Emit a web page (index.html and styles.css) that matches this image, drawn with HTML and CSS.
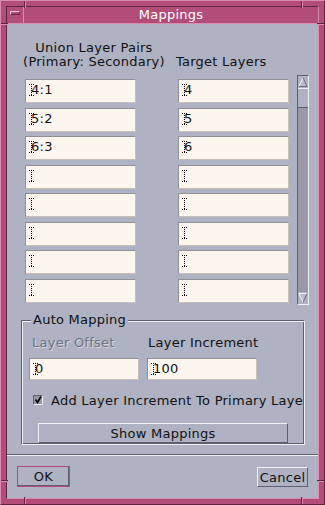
FILE: index.html
```html
<!DOCTYPE html>
<html lang="en">

<head>
  <meta charset="UTF-8">
  <title>Mappings</title>
  <meta name="viewport" content="width=device-width, initial-scale=1.0">
  <link rel="stylesheet" href="styles.css">
</head>

<body>
  <div class="window">
    <!-- frame corner marks -->
    <span class="notch notch-v" style="left: 23px; top: 0"></span>
    <span class="notch notch-v" style="left: 300px; top: 0"></span>
    <span class="notch notch-v" style="left: 23px; bottom: 0"></span>
    <span class="notch notch-v" style="left: 300px; bottom: 0"></span>
    <span class="notch notch-h" style="top: 22px; left: 0"></span>
    <span class="notch notch-h" style="top: 22px; right: 0"></span>
    <span class="notch notch-h" style="top: 479px; left: 0"></span>
    <span class="notch notch-h" style="top: 479px; right: 0"></span>

    <div class="inner">
      <div class="titlebar">
        <span class="menu-btn"><i></i></span>
        <span class="title">Mappings</span>
      </div>

      <div class="client">
        <div class="headings">
          <div class="head-left">Union Layer Pairs<br>(Primary: Secondary)</div>
          <div class="head-right">Target Layers</div>
        </div>

        <div class="lists">
          <div class="fields">
            <div class="field"><span class="caret"></span>4:1</div>
            <div class="field"><span class="caret"></span>4</div>
            <div class="field"><span class="caret"></span>5:2</div>
            <div class="field"><span class="caret"></span>5</div>
            <div class="field"><span class="caret"></span>6:3</div>
            <div class="field"><span class="caret"></span>6</div>
            <div class="field"><span class="caret"></span></div>
            <div class="field"><span class="caret"></span></div>
            <div class="field"><span class="caret"></span></div>
            <div class="field"><span class="caret"></span></div>
            <div class="field"><span class="caret"></span></div>
            <div class="field"><span class="caret"></span></div>
            <div class="field"><span class="caret"></span></div>
            <div class="field"><span class="caret"></span></div>
            <div class="field"><span class="caret"></span></div>
            <div class="field"><span class="caret"></span></div>
          </div>

          <div class="scrollbar">
            <div class="arrow">
              <svg width="10" height="12" viewBox="0 0 10 12">
                <polygon points="5,1.5 9,10.5 1,10.5" fill="#b9bccb" />
                <polyline points="1,10.5 5,1.5" fill="none" stroke="#f4f5f8" />
                <polyline points="5,1.5 9,10.5 1,10.5" fill="none" stroke="#6a6f7e" />
              </svg>
            </div>
            <div class="thumb"></div>
            <div class="track"></div>
            <div class="arrow">
              <svg width="10" height="12" viewBox="0 0 10 12">
                <polygon points="1,1.5 9,1.5 5,10.5" fill="#b9bccb" />
                <polyline points="5,10.5 1,1.5 9,1.5" fill="none" stroke="#f4f5f8" />
                <polyline points="9,1.5 5,10.5" fill="none" stroke="#6a6f7e" />
              </svg>
            </div>
          </div>
        </div>

        <fieldset class="auto">
          <legend>Auto Mapping</legend>
          <div class="auto-grid">
            <span class="label disabled">Layer Offset</span>
            <span class="label">Layer Increment</span>
            <div class="field small"><span class="caret"></span>0</div>
            <div class="field small"><span class="caret"></span>100</div>
          </div>
          <label class="check-row">
            <svg class="check" width="10" height="10" viewBox="0 0 10 10">
              <rect x="0" y="0" width="10" height="10" fill="#9498a8" />
              <path d="M0.5 10V0.5H10" fill="none" stroke="#5c6070" />
              <path d="M9.5 0.5V9.5H0.5" fill="none" stroke="#eef0f4" />
              <path d="M2.5 4.5L4.5 7.5L8 1.5" fill="none" stroke="#000" stroke-width="1.6" />
            </svg>
            <span>Add Layer Increment To Primary Layer</span>
          </label>
          <button class="btn show">Show Mappings</button>
        </fieldset>

        <div class="sep"></div>

        <div class="actions">
          <button class="btn ok">OK</button>
          <button class="btn cancel">Cancel</button>
        </div>
      </div>
    </div>
  </div>
</body>

</html>
```

FILE: styles.css
```css
/* CDE style palette */
:root {
  --frame: #b24d7a;
  --frame-light: #d98cae;
  --frame-dark: #5e2242;
  --bg: #aeb2c3;
  --top-shadow: #eef0f4;
  --bottom-shadow: #5c6070;
  --field-bg: #fdf6ee;
  --track: #9a98a8;
}

* {
  box-sizing: border-box;
}

body {
  margin: 0;
  font-family: "DejaVu Sans", sans-serif;
  font-size: 13px;
  letter-spacing: .25px;
  color: #111;
  background-color: var(--frame);
}

/* window frame */
.window {
  position: relative;
  width: 325px;
  height: 505px;
  padding: 5px;
  background-color: var(--frame);
  border: 1px solid;
  border-color: var(--frame-light) var(--frame-dark) var(--frame-dark) var(--frame-light);
}
.inner {
  border: 1px solid;
  border-color: var(--frame-dark) var(--frame-light) var(--frame-light) var(--frame-dark);
}
.notch {
  position: absolute;
  z-index: 1;
}
.notch-v {
  width: 2px;
  height: 7px;
  border-left: 1px solid var(--frame-dark);
  border-right: 1px solid var(--frame-light);
}
.notch-h {
  width: 7px;
  height: 2px;
  border-top: 1px solid var(--frame-dark);
  border-bottom: 1px solid var(--frame-light);
}

.titlebar {
  display: flex;
  height: 17px;
  border-bottom: 1px solid var(--frame-light);
  color: #fff;
}
.menu-btn {
  width: 17px;
  border-right: 1px solid var(--frame-light);
  padding: 4px 0 0 3px;
}
.menu-btn i {
  display: block;
  width: 10px;
  height: 4px;
  border: 1px solid;
  border-color: #f2cbdc #6a2848 #6a2848 #f2cbdc;
}
.title {
  flex: 1;
  text-align: center;
  line-height: 16px;
}

/* dialog body */
.client {
  height: 474px;
  padding-top: 17px;
  background-color: var(--bg);
}

.headings {
  display: flex;
  height: 28px;
  line-height: 14px;
}
.head-left {
  width: 144px;
  margin-left: 15px;
  text-align: center;
  white-space: nowrap;
}
.head-right {
  margin-left: 10px;
  padding-top: 14px;
}

.lists {
  display: flex;
  align-items: flex-start;
  margin: 10px 0 0 18px;
}
.fields {
  display: grid;
  grid-template-columns: 111px 111px;
  grid-auto-rows: 24px;
  column-gap: 42px;
  row-gap: 4.5px;
}

.field {
  position: relative;
  height: 24px;
  padding: 0 0 2px 5px;
  line-height: 20px;
  white-space: nowrap;
  background-color: var(--field-bg);
  border: 1px solid;
  border-color: #908f96 #c9bfb6 #c9bfb6 #908f96;
}
.field.small {
  height: 22px;
  line-height: 19px;
}
/* dotted i-beam */
.caret {
  position: absolute;
  left: 5px;
  top: 4px;
  width: 1px;
  height: 12px;
  background: repeating-linear-gradient(to bottom, #000 0 1px, transparent 1px 2px);
}
.caret::before, .caret::after {
  content: '';
  position: absolute;
  left: -2px;
  width: 5px;
  height: 1px;
  background: repeating-linear-gradient(to right, #000 0 1px, transparent 1px 2px);
}
.caret::before {top: 0}
.caret::after {bottom: 0}

/* scrollbar */
.scrollbar {
  display: flex;
  flex-direction: column;
  width: 12px;
  height: 230px;
  margin: -4px 0 0 8px;
  background-color: var(--track);
  border: 1px solid;
  border-color: var(--bottom-shadow) var(--top-shadow) var(--top-shadow) var(--bottom-shadow);
}
.arrow {
  height: 12px;
  background-color: var(--bg);
}
.arrow svg {display: block}
.thumb {
  height: 20px;
  background-color: var(--bg);
  border-top: 1px solid var(--top-shadow);
  border-bottom: 1px solid var(--bottom-shadow);
}
.track {flex: 1}

/* auto mapping group */
.auto {
  width: 284px;
  margin: 8px 0 0 14px;
  padding: 0 0 1px 0;
  min-width: 0;
  overflow: hidden;
  border: 1px solid;
  border-color: var(--bottom-shadow) var(--top-shadow) var(--top-shadow) var(--bottom-shadow);
  box-shadow: inset 1px 1px 0 var(--top-shadow), inset -1px -1px 0 var(--bottom-shadow);
}
.auto legend {
  margin-left: 9px;
  padding: 0 2px;
  line-height: 14px;
  background-color: var(--bg);
}
.auto-grid {
  display: grid;
  grid-template-columns: 110px 110px;
  column-gap: 8px;
  row-gap: 8px;
  margin: 9px 0 0 7px;
}
.label {
  line-height: 14px;
  padding-left: 3px;
  white-space: nowrap;
}
.label + .label {padding-left: 1px}
.label.disabled {
  color: #6f7482;
  text-shadow: 1px 1px 0 rgba(238, 240, 244, .6);
}

.check-row {
  display: flex;
  align-items: flex-start;
  gap: 8px;
  margin: 14px 0 0 11px;
  line-height: 14px;
  white-space: nowrap;
}
.check {
  flex: none;
  margin-top: 1px;
}

.btn {
  display: block;
  padding: 0;
  font-family: inherit;
  font-size: 13px;
  letter-spacing: inherit;
  color: #111;
  background-color: var(--bg);
  border: 1px solid;
  border-color: var(--top-shadow) var(--bottom-shadow) var(--bottom-shadow) var(--top-shadow);
  border-radius: 0;
}
.show {
  width: 250px;
  height: 20px;
  margin: 15px 0 0 16px;
  line-height: 17px;
}

.sep {
  margin-top: 9px;
  border-top: 1px solid var(--bottom-shadow);
  border-bottom: 1px solid var(--top-shadow);
}

.actions {
  display: flex;
  justify-content: space-between;
  align-items: flex-start;
  margin-top: 10px;
  padding: 0 10px;
}
.ok {
  width: 53px;
  height: 21px;
  border-color: var(--frame);
  box-shadow: inset -1px -1px 0 var(--bottom-shadow);
}
.cancel {
  width: 51px;
  height: 20px;
  margin-top: 1px;
}
```
